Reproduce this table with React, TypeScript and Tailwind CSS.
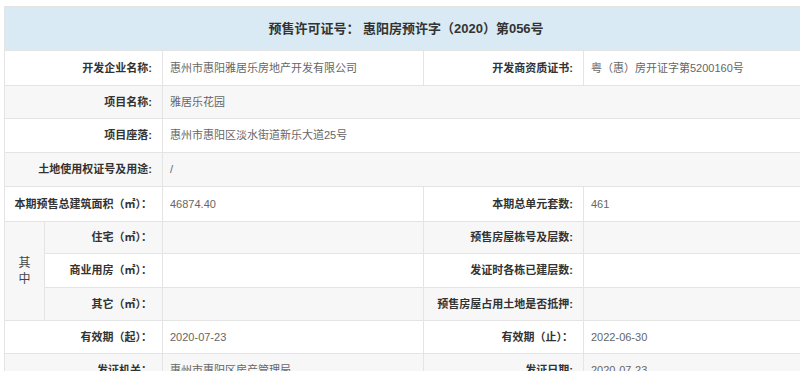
import React from "react"

const font = { fontFamily: '"Liberation Sans", "Noto Sans CJK SC", sans-serif' }

const Label: React.FC<{ children: React.ReactNode; colSpan?: number }> = ({ children, colSpan }) => (
  <td
    colSpan={colSpan}
    className="border border-[#e4e4e4] pr-[10px] text-right text-[11px] font-bold text-[#333]"
  >
    {children}
  </td>
)

const Value: React.FC<{ children?: React.ReactNode }> = ({ children }) => (
  <td className="border border-[#e4e4e4] pl-[7px] text-left text-[11px] text-[#666]">{children}</td>
)

export default function App() {
  return (
    <div className="h-[371px] w-[800px] overflow-hidden bg-white pt-[6px] pl-[4px]" style={font}>
      <table className="w-[830px] table-fixed border-collapse">
        <colgroup>
          <col className="w-[40px]" />
          <col className="w-[118px]" />
          <col className="w-[261px]" />
          <col className="w-[160px]" />
          <col />
        </colgroup>
        <tbody>
          <tr className="h-[44px] bg-[#d9eaf4]">
            <td
              colSpan={5}
              className="border border-[#e4e4e4] pr-[26px] text-center text-[13px] font-bold text-[#333]"
            >
              预售许可证号： 惠阳房预许字（2020）第056号
            </td>
          </tr>
          <tr className="h-[35px] bg-white">
            <Label colSpan={2}>开发企业名称:</Label>
            <Value>惠州市惠阳雅居乐房地产开发有限公司</Value>
            <Label>开发商资质证书:</Label>
            <Value>粤（惠）房开证字第5200160号</Value>
          </tr>
          <tr className="h-[33px] bg-[#f7f7f7]">
            <Label colSpan={2}>项目名称:</Label>
            <td colSpan={3} className="border border-[#e4e4e4] pl-[7px] text-[11px] text-[#666]">
              雅居乐花园
            </td>
          </tr>
          <tr className="h-[34px] bg-white">
            <Label colSpan={2}>项目座落:</Label>
            <td colSpan={3} className="border border-[#e4e4e4] pl-[7px] text-[11px] text-[#666]">
              惠州市惠阳区淡水街道新乐大道25号
            </td>
          </tr>
          <tr className="h-[34px] bg-[#f7f7f7]">
            <Label colSpan={2}>土地使用权证号及用途:</Label>
            <td colSpan={3} className="border border-[#e4e4e4] pl-[7px] text-[11px] text-[#666]">
              /
            </td>
          </tr>
          <tr className="h-[35px] bg-white">
            <Label colSpan={2}>本期预售总建筑面积（㎡）：</Label>
            <Value>46874.40</Value>
            <Label>本期总单元套数:</Label>
            <Value>461</Value>
          </tr>
          <tr className="h-[32px] bg-[#f7f7f7]">
            <td
              rowSpan={3}
              className="border border-[#e4e4e4] text-center text-[12px] leading-[16px] text-[#444]"
            >
              其<br />中
            </td>
            <Label>住宅（㎡）：</Label>
            <Value />
            <Label>预售房屋栋号及层数:</Label>
            <Value />
          </tr>
          <tr className="h-[34px] bg-white">
            <Label>商业用房（㎡）：</Label>
            <Value />
            <Label>发证时各栋已建层数:</Label>
            <Value />
          </tr>
          <tr className="h-[33px] bg-[#f7f7f7]">
            <Label>其它（㎡）：</Label>
            <Value />
            <Label>预售房屋占用土地是否抵押:</Label>
            <Value />
          </tr>
          <tr className="h-[33px] bg-white">
            <Label colSpan={2}>有效期（起）：</Label>
            <Value>2020-07-23</Value>
            <Label>有效期（止）：</Label>
            <Value>2022-06-30</Value>
          </tr>
          <tr className="h-[34px] bg-[#f7f7f7]">
            <Label colSpan={2}>发证机关：</Label>
            <Value>惠州市惠阳区房产管理局</Value>
            <Label>发证日期:</Label>
            <Value>2020-07-23</Value>
          </tr>
        </tbody>
      </table>
    </div>
  )
}
